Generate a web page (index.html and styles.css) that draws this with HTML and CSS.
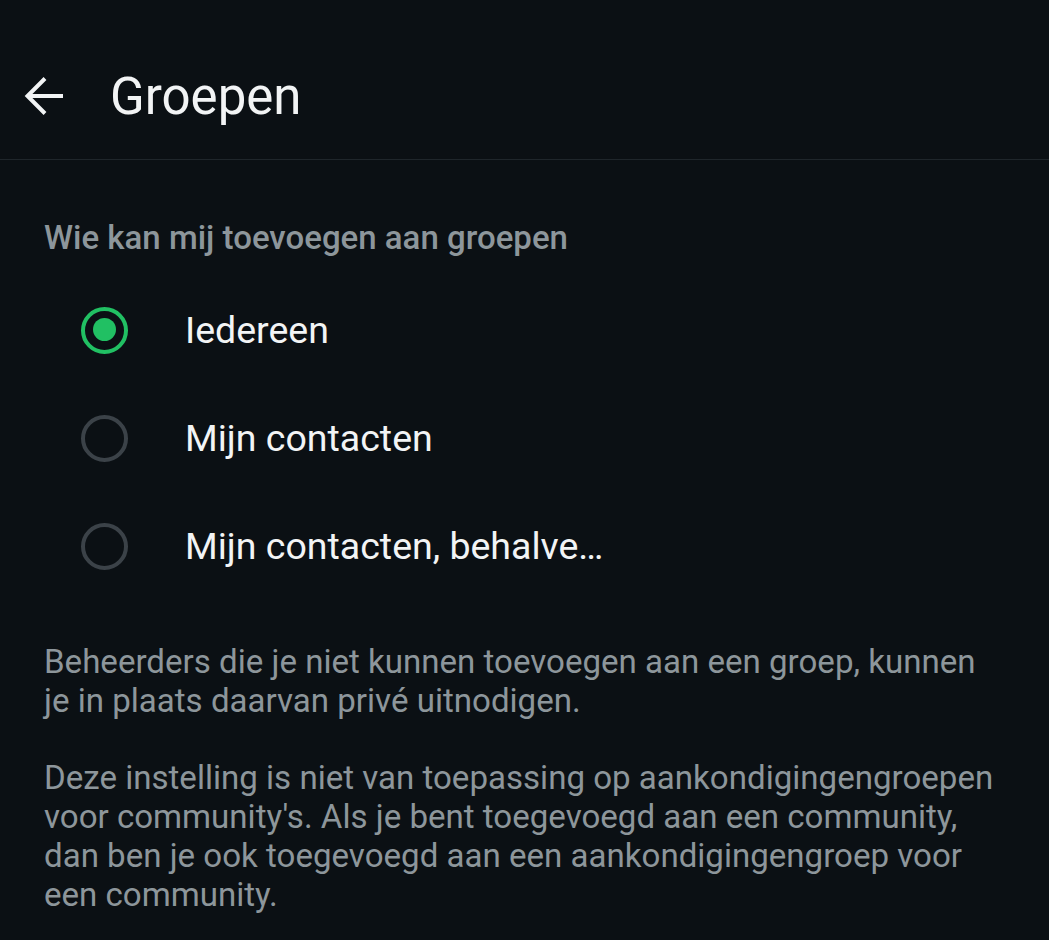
FILE: index.html
```html
<!DOCTYPE html>
<html lang="nl">
<head>
<meta charset="utf-8">
<title>Groepen</title>
<link rel="stylesheet" href="styles.css">
</head>
<body>
<div class="screen">
  <header class="topbar">
    <svg class="back" viewBox="0 0 40 40" width="40" height="40" aria-hidden="true">
      <path d="M39 20H3.5M21 2.5L3.5 20L21 37.5" fill="none" stroke="#f2f4f5" stroke-width="4" stroke-linecap="butt" stroke-linejoin="miter"/>
    </svg>
    <h1 class="title">Groepen</h1>
  </header>
  <main class="content">
    <div class="section-label">Wie kan mij toevoegen aan groepen</div>
    <ul class="options">
      <li class="option"><span class="radio checked"></span><span class="option-text">Iedereen</span></li>
      <li class="option"><span class="radio"></span><span class="option-text">Mijn contacten</span></li>
      <li class="option"><span class="radio"></span><span class="option-text">Mijn contacten, behalve…</span></li>
    </ul>
    <p class="note">Beheerders die je niet kunnen toevoegen aan een groep, kunnen je in plaats daarvan privé uitnodigen.</p>
    <p class="note">Deze instelling is niet van toepassing op aankondigingengroepen voor community's. Als je bent toegevoegd aan een community, dan ben je ook toegevoegd aan een aankondigingengroep voor een community.</p>
  </main>
</div>
</body>
</html>
```
FILE: styles.css
```css
html, body {
  margin: 0;
  padding: 0;
  background: #0b1014;
}
body {
  font-family: Roboto, "Noto Sans", sans-serif;
  color: #f2f4f5;
  width: 1049px;
  height: 940px;
  overflow: hidden;
}
.screen {
  display: flex;
  flex-direction: column;
}
.topbar {
  height: 160px;
  display: flex;
  align-items: center;
  padding-left: 24px;
  padding-top: 38px;
  border-bottom: 1.5px solid #1f262b;
  box-sizing: border-box;
}
.back {
  display: block;
  margin-bottom: 5px;
}
.title {
  margin: 0 0 0 46px;
  font-size: 51px;
  font-weight: 400;
  color: #f2f4f5;
  padding-bottom: 4px;
}
.content {
  padding: 0 44px 0 44px;
}
.section-label {
  margin-top: 60px;
  font-size: 33px;
  font-weight: 500;
  color: #8d969b;
  line-height: 36px;
}
.options {
  list-style: none;
  margin: 20px 0 0 0;
  padding: 0;
}
.option {
  display: flex;
  align-items: center;
  height: 108px;
}
.radio {
  width: 47px;
  height: 47px;
  box-sizing: border-box;
  border-radius: 50%;
  border: 4.5px solid #3b4248;
  margin-left: 37px;
  position: relative;
  flex: none;
}
.radio.checked {
  border-color: #21c063;
}
.radio.checked::after {
  content: "";
  position: absolute;
  left: 7.5px;
  top: 7.5px;
  width: 23px;
  height: 23px;
  border-radius: 50%;
  background: #21c063;
}
.option-text {
  margin-left: 57px;
  font-size: 37.5px;
  color: #f2f4f5;
}
.note {
  margin: 0;
  font-size: 33.1px;
  line-height: 39px;
  color: #8d969b;
}
.options + .note {
  margin-top: 42px;
}
.note + .note {
  margin-top: 38px;
}
```
